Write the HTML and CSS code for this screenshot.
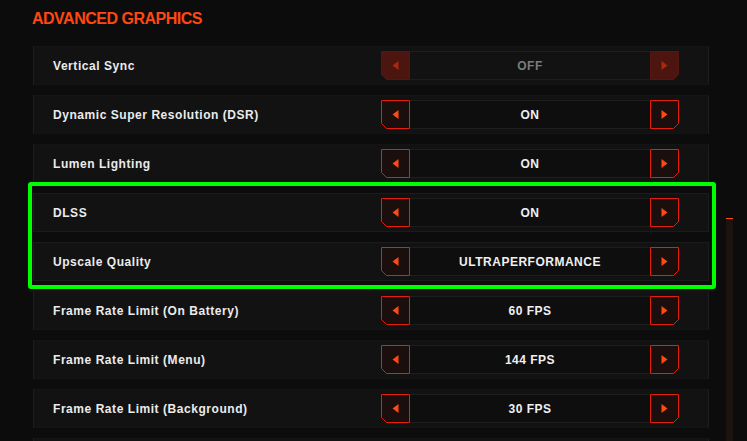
FILE: index.html
```html
<!DOCTYPE html>
<html>
<head>
<meta charset="utf-8">
<link rel="stylesheet" href="styles.css">
</head>
<body>
<div class="page">
  <h1 class="title">ADVANCED GRAPHICS</h1>
  <div class="list">
    <div class="row">
      <div class="label">Vertical Sync</div>
      <div class="ctrl disabled">
        <svg class="btn" viewBox="0 0 29 29"><polygon class="shape" points="0.5,0.5 28.5,0.5 28.5,28.5 5.5,28.5 0.5,23.5"/><polygon class="tri" points="17.5,10 17.5,19 11.5,14.5"/></svg>
        <div class="val">OFF</div>
        <svg class="btn" viewBox="0 0 29 29"><polygon class="shape" points="0.5,0.5 28.5,0.5 28.5,23.5 23.5,28.5 0.5,28.5"/><polygon class="tri" points="11.5,10 11.5,19 17.5,14.5"/></svg>
      </div>
    </div>
    <div class="row">
      <div class="label">Dynamic Super Resolution (DSR)</div>
      <div class="ctrl">
        <svg class="btn" viewBox="0 0 29 29"><polygon class="shape" points="0.5,0.5 28.5,0.5 28.5,28.5 5.5,28.5 0.5,23.5"/><polygon class="tri" points="17.5,10 17.5,19 11.5,14.5"/></svg>
        <div class="val">ON</div>
        <svg class="btn" viewBox="0 0 29 29"><polygon class="shape" points="0.5,0.5 28.5,0.5 28.5,23.5 23.5,28.5 0.5,28.5"/><polygon class="tri" points="11.5,10 11.5,19 17.5,14.5"/></svg>
      </div>
    </div>
    <div class="row">
      <div class="label">Lumen Lighting</div>
      <div class="ctrl">
        <svg class="btn" viewBox="0 0 29 29"><polygon class="shape" points="0.5,0.5 28.5,0.5 28.5,28.5 5.5,28.5 0.5,23.5"/><polygon class="tri" points="17.5,10 17.5,19 11.5,14.5"/></svg>
        <div class="val">ON</div>
        <svg class="btn" viewBox="0 0 29 29"><polygon class="shape" points="0.5,0.5 28.5,0.5 28.5,23.5 23.5,28.5 0.5,28.5"/><polygon class="tri" points="11.5,10 11.5,19 17.5,14.5"/></svg>
      </div>
    </div>
    <div class="highlight">
      <div class="row">
        <div class="label">DLSS</div>
        <div class="ctrl">
          <svg class="btn" viewBox="0 0 29 29"><polygon class="shape" points="0.5,0.5 28.5,0.5 28.5,28.5 5.5,28.5 0.5,23.5"/><polygon class="tri" points="17.5,10 17.5,19 11.5,14.5"/></svg>
          <div class="val">ON</div>
          <svg class="btn" viewBox="0 0 29 29"><polygon class="shape" points="0.5,0.5 28.5,0.5 28.5,23.5 23.5,28.5 0.5,28.5"/><polygon class="tri" points="11.5,10 11.5,19 17.5,14.5"/></svg>
        </div>
      </div>
      <div class="row">
        <div class="label">Upscale Quality</div>
        <div class="ctrl">
          <svg class="btn" viewBox="0 0 29 29"><polygon class="shape" points="0.5,0.5 28.5,0.5 28.5,28.5 5.5,28.5 0.5,23.5"/><polygon class="tri" points="17.5,10 17.5,19 11.5,14.5"/></svg>
          <div class="val">ULTRAPERFORMANCE</div>
          <svg class="btn" viewBox="0 0 29 29"><polygon class="shape" points="0.5,0.5 28.5,0.5 28.5,23.5 23.5,28.5 0.5,28.5"/><polygon class="tri" points="11.5,10 11.5,19 17.5,14.5"/></svg>
        </div>
      </div>
    </div>
    <div class="row">
      <div class="label">Frame Rate Limit (On Battery)</div>
      <div class="ctrl">
        <svg class="btn" viewBox="0 0 29 29"><polygon class="shape" points="0.5,0.5 28.5,0.5 28.5,28.5 5.5,28.5 0.5,23.5"/><polygon class="tri" points="17.5,10 17.5,19 11.5,14.5"/></svg>
        <div class="val">60 FPS</div>
        <svg class="btn" viewBox="0 0 29 29"><polygon class="shape" points="0.5,0.5 28.5,0.5 28.5,23.5 23.5,28.5 0.5,28.5"/><polygon class="tri" points="11.5,10 11.5,19 17.5,14.5"/></svg>
      </div>
    </div>
    <div class="row">
      <div class="label">Frame Rate Limit (Menu)</div>
      <div class="ctrl">
        <svg class="btn" viewBox="0 0 29 29"><polygon class="shape" points="0.5,0.5 28.5,0.5 28.5,28.5 5.5,28.5 0.5,23.5"/><polygon class="tri" points="17.5,10 17.5,19 11.5,14.5"/></svg>
        <div class="val">144 FPS</div>
        <svg class="btn" viewBox="0 0 29 29"><polygon class="shape" points="0.5,0.5 28.5,0.5 28.5,23.5 23.5,28.5 0.5,28.5"/><polygon class="tri" points="11.5,10 11.5,19 17.5,14.5"/></svg>
      </div>
    </div>
    <div class="row">
      <div class="label">Frame Rate Limit (Background)</div>
      <div class="ctrl">
        <svg class="btn" viewBox="0 0 29 29"><polygon class="shape" points="0.5,0.5 28.5,0.5 28.5,28.5 5.5,28.5 0.5,23.5"/><polygon class="tri" points="17.5,10 17.5,19 11.5,14.5"/></svg>
        <div class="val">30 FPS</div>
        <svg class="btn" viewBox="0 0 29 29"><polygon class="shape" points="0.5,0.5 28.5,0.5 28.5,23.5 23.5,28.5 0.5,28.5"/><polygon class="tri" points="11.5,10 11.5,19 17.5,14.5"/></svg>
      </div>
    </div>
    <div class="row"></div>
  </div>
  <div class="scrollbar"></div>
</div>
</body>
</html>
```

FILE: styles.css
```css
html, body {
  margin: 0;
  padding: 0;
  background: #0c0c0c;
  overflow: hidden;
}
.page {
  position: relative;
  width: 747px;
  height: 441px;
  overflow: hidden;
  font-family: "Liberation Sans", Arial, sans-serif;
}
.title {
  margin: 0;
  padding: 10px 0 0 32px;
  height: 46px;
  box-sizing: border-box;
  font-size: 16px;
  font-weight: bold;
  color: #ff4711;
  letter-spacing: -0.5px;
  line-height: 18px;
}
.list {
  margin-left: 33px;
  width: 676px;
  display: flex;
  flex-direction: column;
  gap: 10px;
}
.highlight {
  position: relative;
  display: flex;
  flex-direction: column;
  gap: 10px;
}
.highlight::after {
  content: "";
  position: absolute;
  top: -11px;
  left: -5px;
  right: -7px;
  bottom: -8px;
  border: 4px solid #00ff00;
  border-radius: 3px;
  pointer-events: none;
}
.row {
  height: 39px;
  flex: none;
  box-sizing: border-box;
  background: #121212;
  border: 1px solid #141414;
  border-left-color: #1e1e1e;
  border-right-color: #1d1d1d;
  display: flex;
  align-items: center;
  padding-left: 19px;
  padding-right: 29px;
}
.highlight .row {
  border-color: #1b1b1b;
}
.label {
  flex: 1;
  color: #ebebeb;
  font-size: 12px;
  font-weight: bold;
  letter-spacing: 0.55px;
}
.ctrl {
  width: 298px;
  height: 29px;
  display: flex;
  align-items: stretch;
}
.btn {
  width: 29px;
  height: 29px;
  flex: none;
  display: block;
}
.shape {
  fill: #1b0f0d;
  stroke: #e51d0c;
  stroke-width: 1;
}
.tri {
  fill: #ff4a12;
}
.val {
  flex: 1;
  background: #0e0e0e;
  border-top: 1px solid #1e1e1e;
  border-bottom: 1px solid #1e1e1e;
  display: flex;
  align-items: center;
  justify-content: center;
  color: #f0f0f0;
  font-size: 12px;
  font-weight: bold;
  letter-spacing: 0.5px;
}
.disabled .shape {
  fill: #4d1510;
  stroke: #561611;
}
.disabled .tri {
  fill: #a7290f;
}
.disabled .val {
  color: #7c7c7c;
  background: #121212;
}
.scrollbar {
  position: absolute;
  left: 726px;
  top: 218px;
  width: 7px;
  bottom: 0;
  background: #1c1210;
  border-top: 1px solid #ff4a12;
}
```
